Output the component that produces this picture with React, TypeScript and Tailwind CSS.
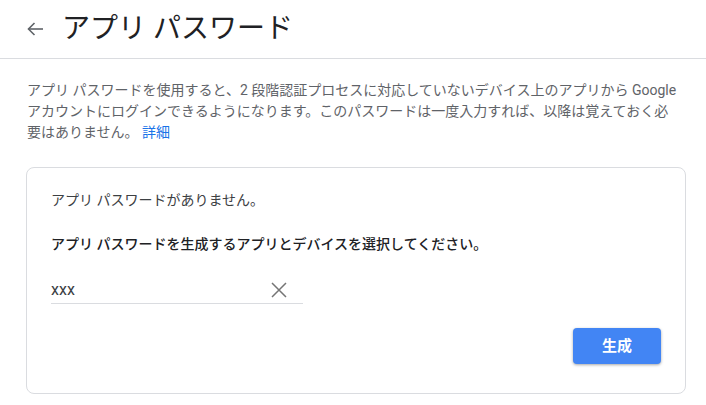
import React, { useState } from 'react'

export default function App() {
  const [appName, setAppName] = useState('xxx')

  return (
    <div className="w-[706px] h-[405px] overflow-hidden bg-white font-['Roboto','Noto_Sans_CJK_JP',sans-serif]">
      {/* ヘッダー */}
      <div className="flex items-center h-[59px] border-b border-[#dadce0] pl-[23px]">
        <button className="w-6 h-6 flex items-center justify-center text-[#5f6368]">
          <svg width="24" height="24" viewBox="0 0 24 24" fill="none" stroke="currentColor" strokeWidth="1.6">
            <path d="M20 12H5.5" />
            <path d="M11.5 6l-6 6 6 6" />
          </svg>
        </button>
        <h1 className="ml-[15px] text-[28px] leading-none text-[#202124] font-normal">アプリ パスワード</h1>
      </div>

      {/* 説明 */}
      <p className="mt-[21px] px-[27px] text-[14px] leading-[21px] text-[#5f6368] whitespace-nowrap">
        アプリ パスワードを使用すると、2 段階認証プロセスに対応していないデバイス上のアプリから Google
        <br />
        アカウントにログインできるようになります。このパスワードは一度入力すれば、以降は覚えておく必
        <br />
        要はありません。 <a className="text-[#1a73e8]">詳細</a>
      </p>

      {/* カード */}
      <div className="mt-6 ml-[26px] w-[660px] border border-[#dadce0] rounded-lg pt-[22px] pb-[29px] px-6">
        <div className="text-[14px] leading-5 text-[#3c4043]">アプリ パスワードがありません。</div>
        <div className="mt-6 text-[14px] leading-5 text-[#202124] font-medium">
          アプリ パスワードを生成するアプリとデバイスを選択してください。
        </div>

        <div className="mt-[23px] w-[252px] h-[27px] flex items-center border-b border-[#dadce0]">
          <input
            value={appName}
            onChange={(e) => setAppName(e.target.value)}
            className="flex-1 min-w-0 text-[16px] leading-5 text-[#3c4043] outline-none bg-transparent"
          />
          <button onClick={() => setAppName('')} className="w-6 h-6 mr-3 flex items-center justify-center text-[#757575]">
            <svg width="24" height="24" viewBox="0 0 24 24" fill="none" stroke="currentColor" strokeWidth="1.5">
              <path d="M5 5l14 14M19 5L5 19" />
            </svg>
          </button>
        </div>

        <div className="mt-6 flex justify-end">
          <button className="w-[88px] h-9 rounded bg-[#4285f4] text-white text-[15px] font-bold shadow-[0_1px_3px_rgba(0,0,0,0.35)]">
            生成
          </button>
        </div>
      </div>
    </div>
  )
}
